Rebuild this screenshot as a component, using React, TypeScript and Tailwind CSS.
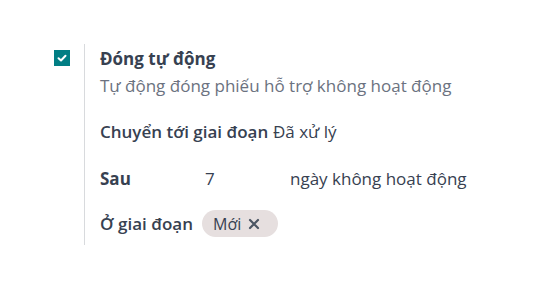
export default function App() {
  return (
    <div className="w-[557px] h-[291px] bg-white" style={{ fontFamily: '"Open Sans", "Noto Sans", sans-serif' }}>
      <div className="flex pt-[44px] pl-[54px]">
        <div className="pt-[6px] w-[30px] shrink-0">
          <div className="w-[16px] h-[16px] bg-[#017e84] flex items-center justify-center">
            <svg width="10" height="10" viewBox="0 0 10 10">
              <path d="M1.5 5.2 L4 7.5 L8.5 2.8" stroke="white" strokeWidth="2" fill="none" strokeLinecap="round" strokeLinejoin="round" />
            </svg>
          </div>
        </div>
        <div className="border-l border-[#d8dadd] pl-[15px] h-[201px] text-[17px] text-[#374151]">
          <div className="font-bold text-[#374151] leading-[20px] mt-[5px]">Đóng tự động</div>
          <div className="text-[#6b7280] leading-[20px] mt-[7px]">Tự động đóng phiếu hỗ trợ không hoạt động</div>
          <div className="flex items-center mt-[26px] h-[20px]">
            <span className="font-semibold w-[173px]">Chuyển tới giai đoạn</span>
            <span>Đã xử lý</span>
          </div>
          <div className="flex items-center mt-[27px] h-[20px]">
            <span className="font-bold w-[105px]">Sau</span>
            <span className="w-[85px]">7</span>
            <span>ngày không hoạt động</span>
          </div>
          <div className="flex items-center mt-[21px] h-[27px]">
            <span className="font-semibold w-[102px]">Ở giai đoạn</span>
            <span className="h-[27px] w-[76px] rounded-full bg-[#e6dfdf] flex items-center pl-[11px] gap-[7px] text-[16px] text-[#374151]">
              Mới
              <svg width="12" height="12" viewBox="0 0 12 12">
                <path d="M2 2 L10 10 M10 2 L2 10" stroke="#4b5563" strokeWidth="2.2" strokeLinecap="round" />
              </svg>
            </span>
          </div>
        </div>
      </div>
    </div>
  );
}
